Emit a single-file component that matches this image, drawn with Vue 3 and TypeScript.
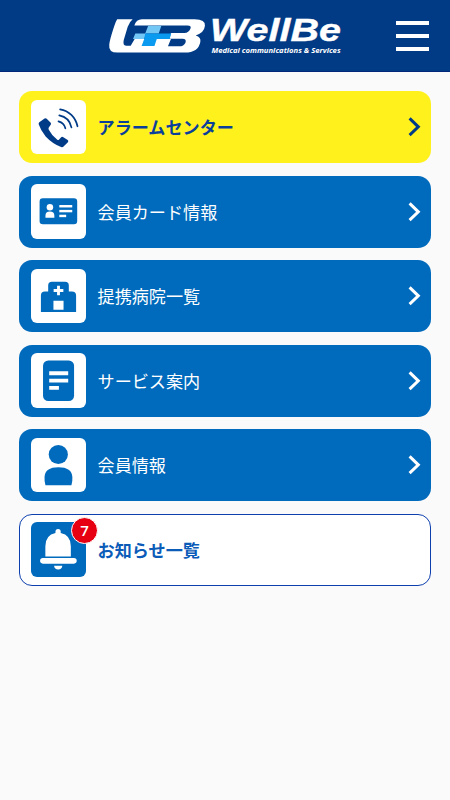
<script setup lang="ts">
type IconName = 'phone' | 'card' | 'hospital' | 'document' | 'person' | 'bell'

interface MenuItem {
  label: string
  icon: IconName
  tone: 'alarm' | 'primary' | 'notice'
  badge?: number
}

const items: MenuItem[] = [
  { label: 'アラームセンター', icon: 'phone', tone: 'alarm' },
  { label: '会員カード情報', icon: 'card', tone: 'primary' },
  { label: '提携病院一覧', icon: 'hospital', tone: 'primary' },
  { label: 'サービス案内', icon: 'document', tone: 'primary' },
  { label: '会員情報', icon: 'person', tone: 'primary' },
  { label: 'お知らせ一覧', icon: 'bell', tone: 'notice', badge: 7 },
]
</script>

<template>
  <div class="screen">
    <header class="header">
      <svg class="logo" viewBox="0 0 240 54" role="img" aria-label="WellBe">
        <g transform="scale(.33) translate(1 0)">
          <path fill="#fff" fill-rule="evenodd" d="M51 28H98Q88 36 83 51L71 91Q67 108 78 108H92L104 88H214L205 110H239Q253 110 258 99Q262 87 249 87H209L214 70H255Q268 69 273 57Q277 47 264 47H103Q109 28 126 28H286Q319 28 317 48Q315 69 289 77Q306 82 303 97Q297 129 256 129H52Q24 129 27 105Q28 91 42 49Q47 34 51 28Z" />
          <path fill="#73c7f5" d="M145 48H185L177 71H136ZM106 71H138L133 88H99Z" />
          <path fill="#0a9af0" d="M136 71H215L210 88H171L164 109H125L133 88Z" />
        </g>
        <text class="brand" x="110" y="31.2" textLength="131" lengthAdjust="spacingAndGlyphs">WellBe</text>
        <text class="tagline" x="111.5" y="42.6" textLength="129" lengthAdjust="spacingAndGlyphs">Medical communications &amp; Services</text>
      </svg>
      <button class="menu-button" type="button" aria-label="メニュー">
        <span></span><span></span><span></span>
      </button>
    </header>

    <nav class="menu">
      <a v-for="item in items" :key="item.label" class="item" :class="item.tone">
        <span class="tile">
          <svg viewBox="0 0 54 54" fill="currentColor">
            <g v-if="item.icon === 'phone'">
              <path d="M8.2 22 13.4 18.2Q14.8 17.5 15.8 18.8L19.5 22.5Q20.4 23.6 19.3 24.8L17.6 27.3Q17 28.3 17.6 29.4Q20.9 35.6 26 39.4Q27 40 27.8 39L29.6 37Q30.6 35.8 32 36.8L36.3 39.6Q37.5 40.5 36.5 41.7L32.2 46.1Q31.2 47 29.8 46.5Q21 43 14.5 36Q9.5 30 7.6 24Q7.3 22.8 8.2 22Z" />
              <g fill="none" stroke="currentColor" stroke-width="1.7" stroke-linecap="round">
                <path d="M28.8 9.2C37.5 10.6 44 17 46 26" />
                <path d="M28 15.2C34.2 16.4 38.7 21 40 27.1" />
                <path d="M27.2 21.1C31 22.1 33.2 24.5 34 28" />
              </g>
            </g>
            <g v-else-if="item.icon === 'card'">
              <rect x="8.5" y="14.2" width="37.2" height="25.6" rx="3.2" />
              <g fill="#fff">
                <circle cx="18.7" cy="22.9" r="3.2" />
                <path d="M14.3 33.3V31.2Q14.3 27.2 18.7 27.2T23.1 31.2V33.3Z" />
                <rect x="28" y="20.8" width="12.8" height="2.4" />
                <rect x="28" y="25.6" width="12.8" height="2.4" />
                <rect x="28" y="30.4" width="6.8" height="2.4" />
              </g>
            </g>
            <g v-else-if="item.icon === 'hospital'">
              <path d="M9.8 42.5V26.2Q9.8 22.2 13.8 22.2H17V16.2Q17 12.5 20.7 12.5H33.7Q37.4 12.5 37.4 16.2V22.2H40.4Q44.6 22.2 44.6 26.2V42.5Z" />
              <path fill="#fff" d="M25.8 16.6H28.6V19.9H32V22.7H28.6V26H25.8V22.7H22.4V19.9H25.8ZM22.2 31.4H32.2V40.2H22.2Z" />
            </g>
            <g v-else-if="item.icon === 'document'">
              <rect x="11.9" y="7.4" width="30.7" height="40" rx="5.2" />
              <path fill="#fff" d="M18 18.1H36.8V21.9H18ZM18 25.4H36.8V29.2H18ZM18 32.6H27.6V36.4H18Z" />
            </g>
            <g v-else-if="item.icon === 'person'">
              <ellipse cx="27" cy="16.3" rx="9.5" ry="9.3" />
              <path d="M14.3 46.7Q13.1 42.5 13.4 38.6Q13.8 28.9 27.1 28.9T40.9 38.6Q41.2 42.5 40 46.7Z" />
            </g>
            <g v-else fill="#fff">
              <path d="M24.2 11V9.5Q24.2 6.9 26.8 6.9T29.4 9.5V11Q39.4 13.1 39.4 24V34.2H14.2V24Q14.2 13.1 24.2 11Z" />
              <rect x="9" y="35.7" width="36.2" height="5.5" rx="2.75" />
              <path d="M22.8 43.3H31Q30.5 47 26.9 47T22.8 43.3Z" />
            </g>
          </svg>
          <span v-if="item.badge" class="badge">{{ item.badge }}</span>
        </span>
        <span class="label">{{ item.label }}</span>
        <svg v-if="item.tone !== 'notice'" class="chevron" viewBox="0 0 13 20">
          <path d="M1.6 1.4 10.3 9.8 1.6 18.2" fill="none" stroke="currentColor" stroke-width="3" />
        </svg>
      </a>
    </nav>
  </div>
</template>

<style>
body {
  background: #fafafa;
}
</style>

<style scoped>
.screen {
  min-height: 800px;
  background: #fafafa;
  font-family: "Noto Sans CJK JP", sans-serif;
}
.header {
  box-sizing: border-box;
  display: flex;
  align-items: flex-start;
  justify-content: space-between;
  height: 71.5px;
  padding: 10px 21px 0 100px;
  background: #013b86;
  border-bottom: 1px solid #01267a;
}
.logo {
  width: 240px;
  height: 54px;
  overflow: visible;
}
.brand {
  fill: #fff;
  stroke: #fff;
  stroke-width: 0.4px;
  font: italic 700 30.5px "Liberation Sans", sans-serif;
}
.tagline {
  fill: #fff;
  font: italic 700 7px "Open Sans", sans-serif;
}
.menu-button {
  display: flex;
  flex-direction: column;
  gap: 9.2px;
  width: 33px;
  margin-top: 11px;
  padding: 0;
  border: 0;
  background: none;
}
.menu-button span {
  height: 3.8px;
  background: #fff;
}
.menu {
  display: flex;
  flex-direction: column;
  gap: 12.7px;
  padding: 19.8px 19px 0;
}
.item {
  box-sizing: border-box;
  display: flex;
  align-items: center;
  height: 71.8px;
  padding: 0 10px 0 12px;
  border-radius: 13px;
}
.alarm {
  background: #fff11c;
  color: #003b88;
}
.primary {
  background: #006abc;
  color: #fff;
}
.notice {
  padding: 0 9px 0 11px;
  border: 1px solid #0d3fae;
  background: #fff;
  color: #0b5bb8;
}
.tile {
  position: relative;
  flex: none;
  width: 54.6px;
  height: 54.6px;
  border-radius: 6px;
  background: #fff;
}
.tile svg {
  display: block;
  width: 100%;
  height: 100%;
}
.primary .tile {
  color: #006abc;
}
.notice .tile {
  background: #006abc;
}
.badge {
  position: absolute;
  top: -5.5px;
  right: -12.5px;
  box-sizing: border-box;
  width: 27px;
  height: 27px;
  border: 1px solid #fff;
  border-radius: 50%;
  background: #e60012;
  color: #fff;
  font: 600 15px/25px "Open Sans", sans-serif;
  text-align: center;
}
.label {
  flex: 1;
  margin-left: 12px;
  font-size: 17.1px;
  line-height: 24px;
}
.alarm .label,
.notice .label {
  font-weight: 700;
}
.alarm .label {
  color: #0b3f9c;
}
.chevron {
  width: 13px;
  height: 20px;
}
</style>
